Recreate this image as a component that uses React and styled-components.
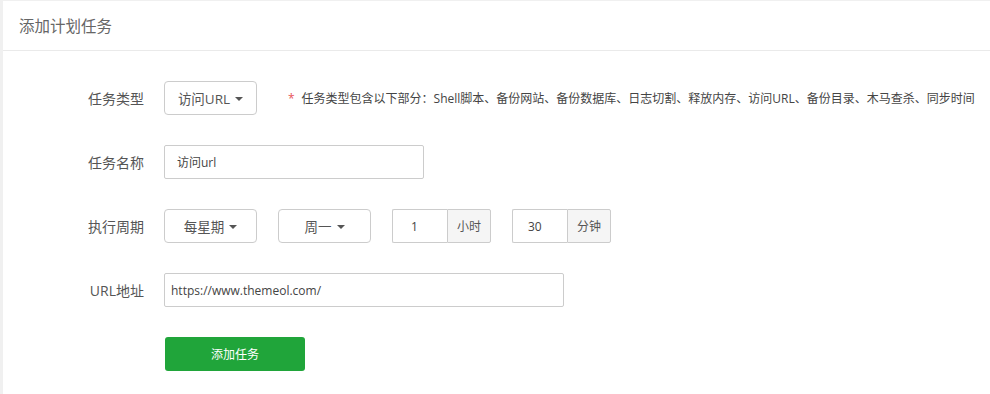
import styled, { createGlobalStyle } from 'styled-components';

const GlobalStyle = createGlobalStyle`
  html, body {
    margin: 0;
    padding: 0;
    background: #f0f0f0;
  }
  body {
    font-family: "Open Sans", "Noto Sans CJK SC", sans-serif;
    color: #555;
  }
  * { box-sizing: border-box; }
`;

const Page = styled.div`
  padding: 1px 0 0 3px;
  height: 394px;
`;

const Panel = styled.div`
  background: #fff;
  height: 100%;
  display: flex;
  flex-direction: column;
`;

const Header = styled.div`
  height: 50px;
  display: flex;
  align-items: center;
  padding-left: 16px;
  font-size: 15.5px;
  color: #666;
  border-bottom: 1px solid #eaeaea;
`;

const Form = styled.div`
  padding-top: 30px;
  display: flex;
  flex-direction: column;
  gap: 30px;
`;

const Row = styled.div`
  display: flex;
  align-items: center;
  height: 34px;
`;

const Label = styled.label`
  width: 141px;
  text-align: right;
  margin-right: 20px;
  font-size: 14px;
  color: #555;
`;

const Controls = styled.div`
  display: flex;
  align-items: center;
  gap: 21px;
`;

const SelectBtn = styled.div`
  width: ${p => p.$w || 93}px;
  height: 34px;
  border: 1px solid #ccc;
  border-radius: 4px;
  display: flex;
  align-items: center;
  justify-content: center;
  gap: 5px;
  font-size: 13.5px;
  color: #555;
`;

const Caret = styled.span`
  width: 0;
  height: 0;
  border-left: 4px solid transparent;
  border-right: 4px solid transparent;
  border-top: 4px solid #555;
  margin-top: 1px;
`;

const Note = styled.div`
  margin-left: 31px;
  font-size: 12px;
  color: #444;
  white-space: nowrap;
`;

const Star = styled.span`
  color: #e8555a;
  margin-right: 7px;
`;

const TextInput = styled.input`
  width: ${p => p.$w}px;
  height: 34px;
  border: 1px solid #ccc;
  border-radius: 2px;
  padding: 0 ${p => p.$pad || 12}px;
  font-family: inherit;
  font-size: 12px;
  color: #444;
  outline: none;
`;

const Group = styled.div`
  display: flex;
  height: 34px;
`;

const GroupInput = styled(TextInput)`
  border-right: none;
  border-radius: 2px 0 0 2px;
`;

const Addon = styled.span`
  width: 44px;
  height: 34px;
  border: 1px solid #ccc;
  border-radius: 0 2px 2px 0;
  background: #f5f5f5;
  display: flex;
  align-items: center;
  justify-content: center;
  font-size: 12px;
  color: #555;
`;

const SubmitRow = styled.div`
  padding-left: 162px;
`;

const Submit = styled.button`
  width: 140px;
  height: 34px;
  border: none;
  border-radius: 3px;
  background: #20a53a;
  color: #fff;
  font-family: inherit;
  font-size: 12px;
`;

export default function App() {
  return (
    <>
      <GlobalStyle />
      <Page>
        <Panel>
          <Header>添加计划任务</Header>
          <Form>
            <Row>
              <Label>任务类型</Label>
              <Controls>
                <SelectBtn $w={93}>访问URL <Caret /></SelectBtn>
              </Controls>
              <Note>
                <Star>*</Star>
                任务类型包含以下部分：Shell脚本、备份网站、备份数据库、日志切割、释放内存、访问URL、备份目录、木马查杀、同步时间
              </Note>
            </Row>
            <Row>
              <Label>任务名称</Label>
              <TextInput $w={260} defaultValue="访问url" />
            </Row>
            <Row>
              <Label>执行周期</Label>
              <Controls>
                <SelectBtn $w={93}>每星期 <Caret /></SelectBtn>
                <SelectBtn $w={93}>周一 <Caret /></SelectBtn>
                <Group>
                  <GroupInput $w={55} $pad={18} defaultValue="1" />
                  <Addon>小时</Addon>
                </Group>
                <Group>
                  <GroupInput $w={55} $pad={15} defaultValue="30" />
                  <Addon>分钟</Addon>
                </Group>
              </Controls>
            </Row>
            <Row>
              <Label>URL地址</Label>
              <TextInput $w={400} $pad={6} defaultValue="https://www.themeol.com/" />
            </Row>
            <SubmitRow>
              <Submit>添加任务</Submit>
            </SubmitRow>
          </Form>
        </Panel>
      </Page>
    </>
  );
}
